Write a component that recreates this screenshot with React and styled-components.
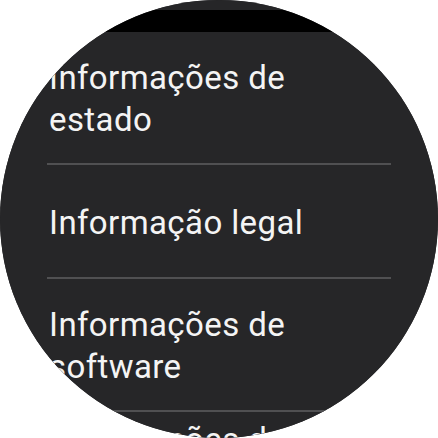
import React from "react";
import styled, { createGlobalStyle } from "styled-components";

const GlobalStyle = createGlobalStyle`
  html, body {
    margin: 0;
    padding: 0;
    background: #ffffff;
  }
`;

const Screen = styled.div`
  width: 438px;
  height: 438px;
  border-radius: 50%;
  overflow: hidden;
  background: #262628;
  display: flex;
  flex-direction: column;
  font-family: Roboto, "Noto Sans", sans-serif;
`;

const CardEnd = styled.div`
  flex: none;
  height: 10px;
  background: #262628;
`;

const Gap = styled.div`
  flex: none;
  height: 22px;
  background: #000000;
`;

const List = styled.div`
  display: flex;
  flex-direction: column;
  background: #262628;
`;

const Item = styled.div`
  display: flex;
  align-items: center;
  box-sizing: border-box;
  min-height: 114px;
  margin: 0 47px;
  padding: ${(p) => (p.$peek ? "5px 0 22px" : "25px 0 22px")};
  border-bottom: ${(p) => (p.$last ? "none" : "2px solid #505052")};
  flex: none;
`;

const Label = styled.span`
  padding: 0 20px 0 2px;
  color: #f4f4f4;
  font-size: 33px;
  line-height: 42px;
  letter-spacing: 0.4px;
`;

const items = [
  "Informações de estado",
  "Informação legal",
  "Informações de software",
  "Informações de segurança",
];

export default function App() {
  return (
    <>
      <GlobalStyle />
      <Screen>
        <CardEnd />
        <Gap />
        <List>
          {items.map((text, i) => (
            <Item
              key={text}
              $peek={i === items.length - 1}
              $last={i === items.length - 1}
            >
              <Label>{text}</Label>
            </Item>
          ))}
        </List>
      </Screen>
    </>
  );
}
